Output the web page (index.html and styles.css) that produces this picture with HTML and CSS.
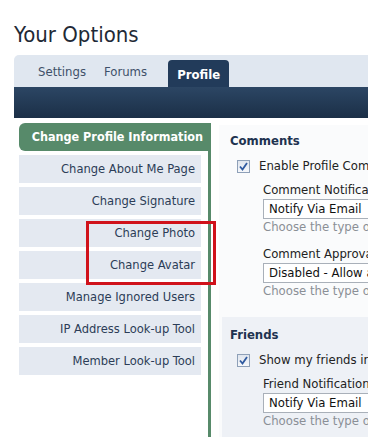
FILE: index.html
```html
<!DOCTYPE html>
<html lang="en">
<head>
    <meta charset="UTF-8">
    <title>Your Options</title>
    <link rel="stylesheet" href="styles.css">
</head>
<body>
    <div class="page">
        <h1 class="title">Your Options</h1>
        <div class="nav">
            <div class="tabs">
                <a href="#" class="tab">Settings</a>
                <a href="#" class="tab">Forums</a>
                <a href="#" class="tab active">Profile</a>
            </div>
            <div class="subbar"></div>
        </div>
        <div class="content">
            <div class="sidebar">
                <div class="side-head">Change Profile Information</div>
                <a href="#" class="side-item">Change About Me Page</a>
                <a href="#" class="side-item">Change Signature</a>
                <div class="marked">
                    <a href="#" class="side-item">Change Photo</a>
                    <a href="#" class="side-item">Change Avatar</a>
                </div>
                <a href="#" class="side-item">Manage Ignored Users</a>
                <a href="#" class="side-item">IP Address Look-up Tool</a>
                <a href="#" class="side-item">Member Look-up Tool</a>
            </div>
            <div class="main">
                <div class="section">
                    <h3>Comments</h3>
                    <div class="check-row">
                        <span class="check"><svg width="13" height="13" viewBox="0 0 13 13"><path d="M3 6.5 L5.5 9.5 L10 3" fill="none" stroke="#2f5aa0" stroke-width="1.8"/></svg></span>
                        Enable Profile Comments
                    </div>
                    <div class="field">
                        <div class="label">Comment Notification</div>
                        <div class="select">Notify Via Email</div>
                        <div class="help">Choose the type of notification</div>
                    </div>
                    <div class="field">
                        <div class="label">Comment Approval</div>
                        <div class="select">Disabled - Allow all comments</div>
                        <div class="help">Choose the type of approval</div>
                    </div>
                </div>
                <div class="section alt">
                    <h3>Friends</h3>
                    <div class="check-row">
                        <span class="check"><svg width="13" height="13" viewBox="0 0 13 13"><path d="M3 6.5 L5.5 9.5 L10 3" fill="none" stroke="#2f5aa0" stroke-width="1.8"/></svg></span>
                        Show my friends in my profile
                    </div>
                    <div class="field">
                        <div class="label">Friend Notification</div>
                        <div class="select">Notify Via Email</div>
                        <div class="help">Choose the type of notification</div>
                    </div>
                </div>
            </div>
        </div>
    </div>
</body>
</html>
```
FILE: styles.css
```css
body {
    margin: 0;
    padding: 0;
    background-color: #fff;
    font-family: Tahoma, "DejaVu Sans Condensed", "DejaVu Sans", sans-serif;
    font-size: 13px;
    color: #2c3d57;
    overflow: hidden;
}

.page {
    height: 437px;
    display: flex;
    flex-direction: column;
    padding-left: 14px;
    box-sizing: border-box;
}

.title {
    margin: 0;
    padding-top: 22px;
    height: 55px;
    flex-shrink: 0;
    box-sizing: border-box;
    font-size: 22px;
    font-weight: normal;
    line-height: 26px;
    color: #1f2a36;
}

.nav {
    flex-shrink: 0;
    border-top-left-radius: 5px;
    overflow: hidden;
}

.tabs {
    height: 32px;
    background-color: #e0e7f0;
    display: flex;
    align-items: flex-end;
    padding-left: 24px;
}

.tab {
    color: #3e5069;
    text-decoration: none;
    line-height: 16px;
    padding-bottom: 7px;
    margin-right: 18px;
}

.tab.active {
    background-color: #223b5a;
    color: #fff;
    font-weight: bold;
    height: 27px;
    box-sizing: border-box;
    padding: 7px 9px 0 9px;
    margin-left: 3px;
    border-radius: 4px 4px 0 0;
}

.subbar {
    height: 31px;
    background: linear-gradient(#2c4664, #1b2f47);
}

.content {
    flex: 1;
    min-height: 0;
    display: flex;
    margin-top: 5px;
}

.sidebar {
    width: 189px;
    margin-left: 5px;
    border-right: 3px solid #578a6a;
    display: flex;
    flex-direction: column;
    gap: 4px;
}

.side-head {
    height: 28px;
    margin-right: -3px;
    background-color: #578a6a;
    color: #fff;
    font-weight: bold;
    font-size: 12.5px;
    line-height: 28px;
    text-align: right;
    padding-right: 8px;
    border-radius: 6px 0 0 6px;
}

.side-item {
    display: block;
    width: 182px;
    height: 28px;
    box-sizing: border-box;
    background-color: #e4e9f1;
    color: #2c3d57;
    text-decoration: none;
    font-size: 12.8px;
    line-height: 28px;
    text-align: right;
    padding-right: 6px;
}

.marked {
    position: relative;
    display: flex;
    flex-direction: column;
    gap: 4px;
}

/* red highlight box drawn over the two links */
.marked::after {
    content: "";
    position: absolute;
    top: 2px;
    left: 67px;
    right: -8px;
    bottom: -6px;
    border: 3px solid #d0121b;
}

.main {
    flex: 1;
    margin-left: 8px;
    margin-top: 2px;
    background-color: #fafbfc;
    overflow: hidden;
}

.section {
    padding: 8px 0 18px 11px;
    white-space: nowrap;
}

.section.alt {
    background-color: #eef1f6;
    margin-left: 3px;
    padding-top: 10px;
    padding-left: 8px;
}

h3 {
    margin: 0;
    font-size: 13px;
    line-height: 16px;
    color: #1e3350;
}

.check-row {
    display: flex;
    align-items: center;
    gap: 9px;
    margin-top: 9px;
    margin-left: 7px;
    line-height: 16px;
    color: #222;
}

.check {
    width: 13px;
    height: 13px;
    box-sizing: border-box;
    border: 1px solid #8ea0b8;
    background: linear-gradient(#dfe5ee, #f6f8fb);
    display: flex;
}

.check svg {
    margin: -1px;
}

.field {
    margin-left: 33px;
    margin-top: 8px;
}

.field + .field {
    margin-top: 11px;
}

.label {
    line-height: 16px;
    color: #222;
}

.select {
    margin-top: 1px;
    width: 200px;
    height: 20px;
    box-sizing: border-box;
    border: 1px solid #a9b0b9;
    background-color: #fff;
    padding-left: 5px;
    line-height: 18px;
    color: #111;
}

.help {
    line-height: 16px;
    color: #8a8f96;
}
```
